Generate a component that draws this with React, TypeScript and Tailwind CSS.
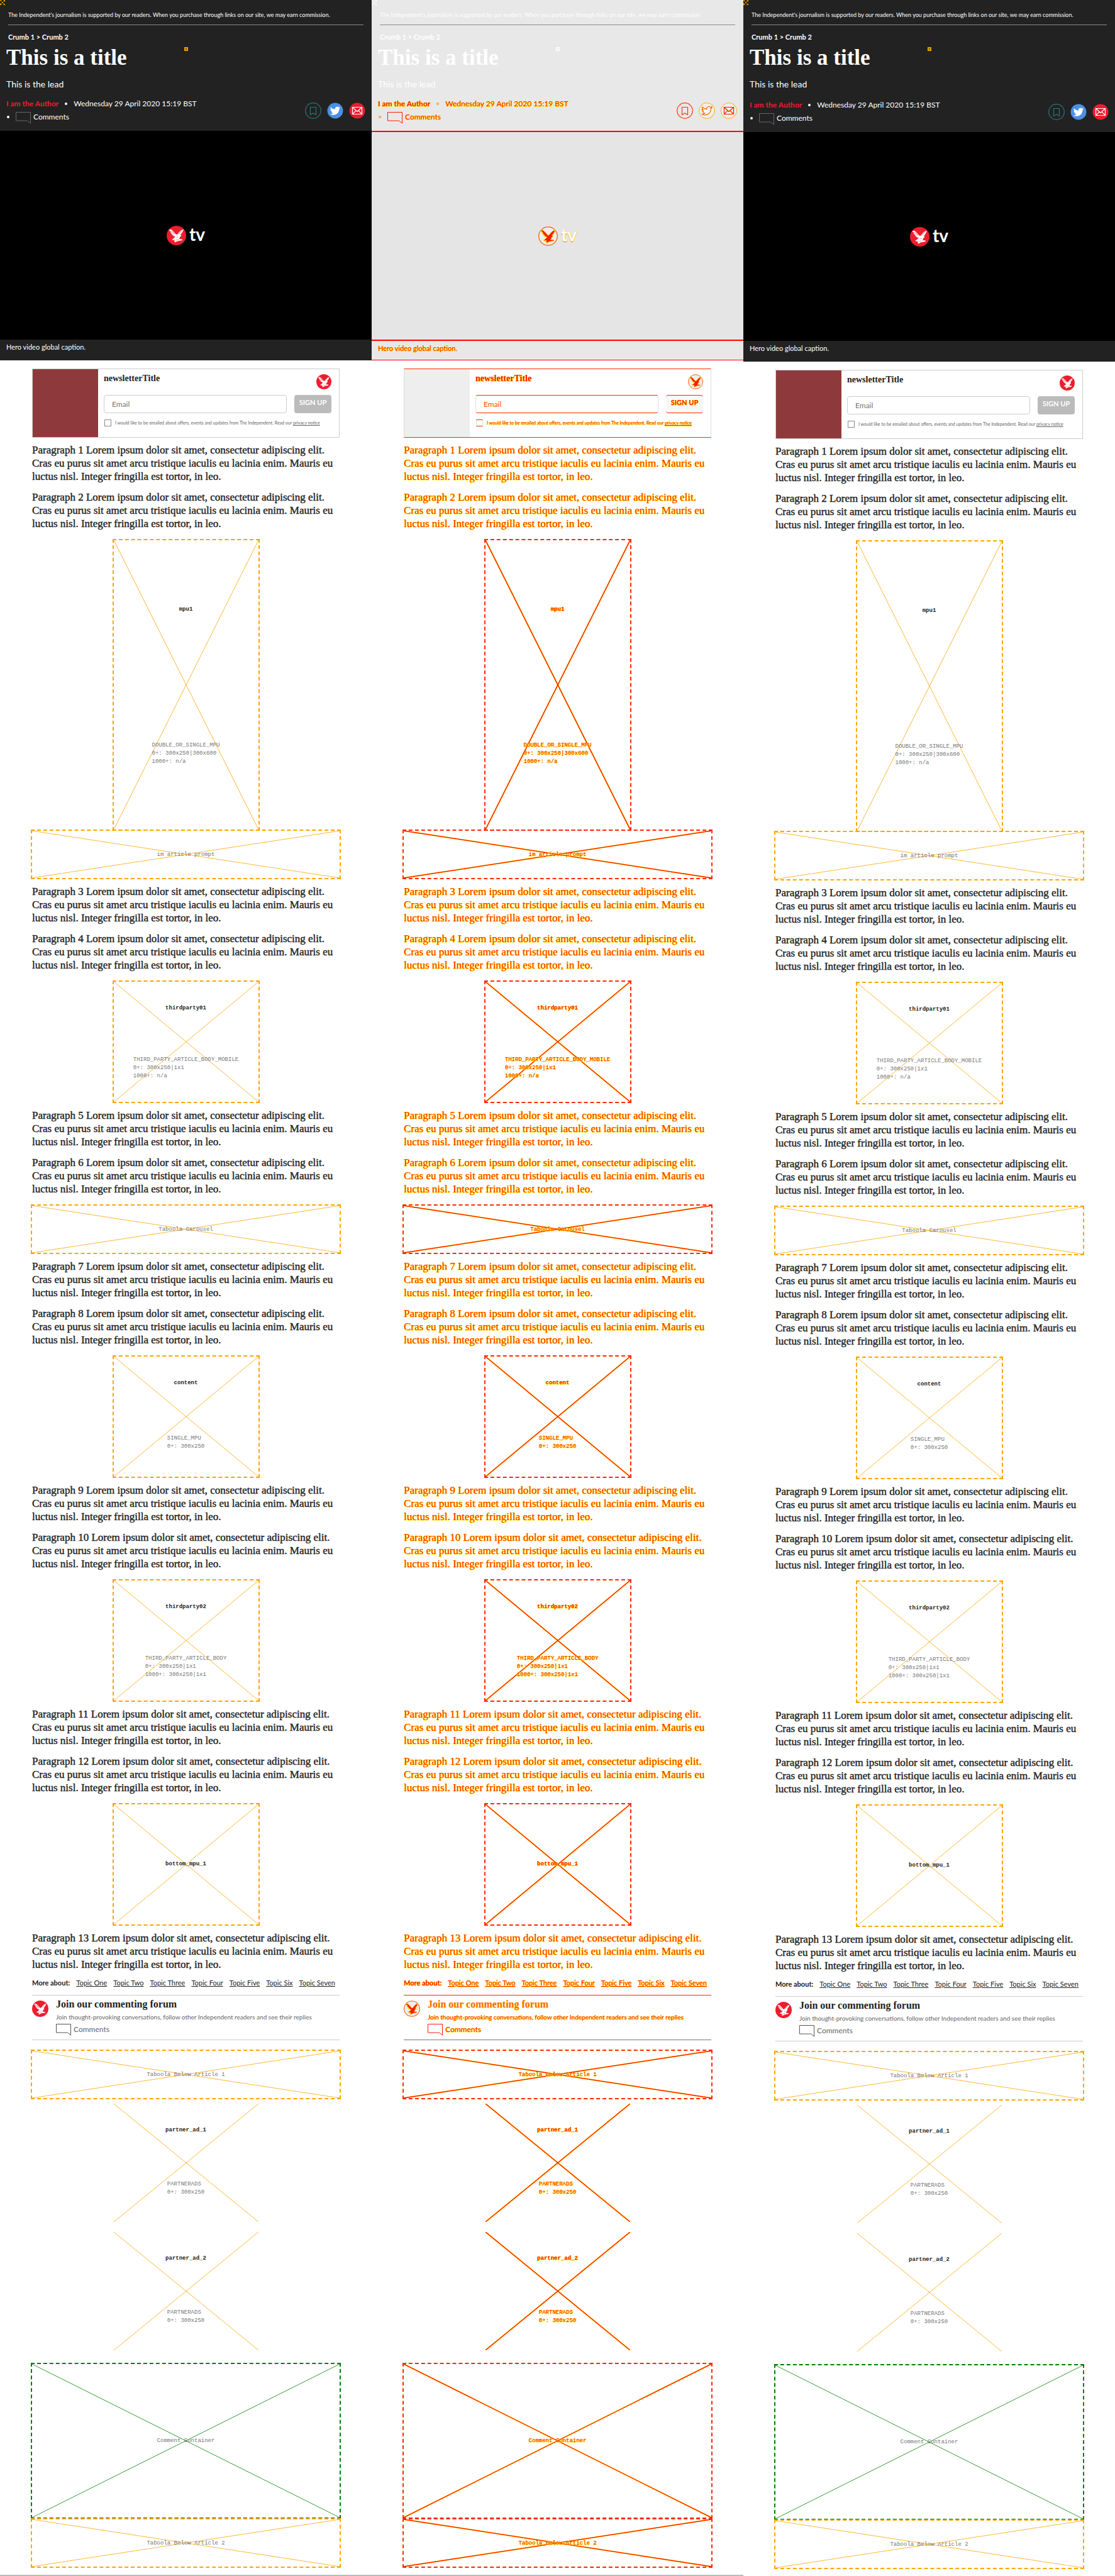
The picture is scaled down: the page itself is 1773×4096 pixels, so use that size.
import React, { createContext, useContext, useId } from "react";

type Variant = "base" | "diff" | "next";
const VariantContext = createContext<Variant>("base");
const useDiff = () => useContext(VariantContext) === "diff";

const changed = "text-[#ff1a00] [text-shadow:1px_0_0_#ffee00,0_1px_0_#ffee00]";
const LOREM =
  "Lorem ipsum dolor sit amet, consectetur adipiscing elit. Cras eu purus sit amet arcu tristique iaculis eu lacinia enim. Mauris eu luctus nisl. Integer fringilla est tortor, in leo.";
const TOPICS = ["One", "Two", "Three", "Four", "Five", "Six", "Seven"];

function Cross({ color }: { color: string }) {
  const diff = useDiff();
  return (
    <svg className="absolute inset-0 h-full w-full" aria-hidden="true">
      {diff && (
        <g stroke="#ffe000" strokeWidth="2.2">
          <line x1="0" y1="0" x2="100%" y2="100%" />
          <line x1="0" y1="100%" x2="100%" y2="0" />
        </g>
      )}
      <g stroke={diff ? "#ff1000" : color} strokeWidth={diff ? 1.3 : 0.8}>
        <line x1="0" y1="0" x2="100%" y2="100%" />
        <line x1="0" y1="100%" x2="100%" y2="0" />
      </g>
    </svg>
  );
}

function Strip({ label, size, green }: { label: string; size: string; green?: boolean }) {
  const diff = useDiff();
  const border = diff ? "border-[#ff2a00]" : green ? "border-[#008000]" : "border-[#ffa500]";
  return (
    <div
      className={`relative -mx-0.5 flex items-center justify-center border-2 border-dashed font-['Liberation_Mono',monospace] text-[9px] leading-[14px] ${border} ${size}`}
    >
      <Cross color={green ? "#008000" : "#ffa500"} />
      <span className={`relative ${diff ? changed : "text-[#777]"}`}>{label}</span>
    </div>
  );
}

function Ad({
  name,
  lines,
  size = "h-[195px]",
  plain,
}: {
  name: string;
  lines?: string[];
  size?: string;
  plain?: boolean;
}) {
  const diff = useDiff();
  const border = plain ? "border-transparent" : diff ? "border-[#ff2a00]" : "border-[#ffa500]";
  return (
    <div
      className={`relative mx-auto grid w-[234px] auto-rows-fr border-2 border-dashed font-['Liberation_Mono',monospace] text-[9px] leading-[13px] ${border} ${size}`}
    >
      <Cross color="#ffa500" />
      <strong
        className={`relative flex items-center justify-center ${lines ? "pb-2.5" : "pb-0"} ${diff ? changed : "text-[#222]"}`}
      >
        {name}
      </strong>
      {lines && (
        <div className="relative flex items-center justify-center pb-3">
          <div className={diff ? changed : "text-[#777]"}>
            {lines.map((line) => (
              <p key={line}>{line}</p>
            ))}
          </div>
        </div>
      )}
    </div>
  );
}

function Paragraphs({ from, to }: { from: number; to: number }) {
  const diff = useDiff();
  const items = [];
  for (let n = from; n <= to; n++) items.push(n);
  return (
    <div className="flex flex-col gap-3 pt-[9px] pb-[14px]">
      {items.map((n) => (
        <p
          key={n}
          className={`font-['Liberation_Serif',serif] text-[17px] leading-[21px] ${
            diff ? "text-[#ff3000] [text-shadow:1px_0_0_#ffee00,0_1px_0_#ffee00]" : "text-[#222] [-webkit-text-stroke:0.4px_#222]"
          }`}
        >
          {`Paragraph ${n} ${LOREM}`}
        </p>
      ))}
    </div>
  );
}

function Eagle({ className }: { className: string }) {
  const diff = useDiff();
  const disc = diff ? "#eeeeee" : "#ee1c2e";
  const bird = diff ? "#ff1a00" : "#ffffff";
  return (
    <svg viewBox="0 0 40 40" className={className} role="img" aria-label="Independent">
      <circle cx="20" cy="20" r={diff ? 19 : 20} fill={disc} stroke={diff ? "#ff5a00" : "none"} strokeWidth="1.6" />
      <path
        fill={bird}
        stroke={diff ? "#ffe600" : "none"}
        d="M5 8.500L8 7.500L10 8L13 10.500L17 15L20 18.500L22.500 17L26 12.500L30 9L34.500 7.300L33.500 11L31 15L28.500 18.500L30 20L29.500 21.500L27.500 22L27 25L25 27L31.500 27.500L32.500 28.500L31 30L27 30.500L22 31.500L18 34L15.500 33.500L17 31.500L15 31L17 29L12.500 29.500L10.500 28.500L14 26L18 22L12.500 21L15 20.500L10 18.500L13 18L8 15.500L10.500 15L6.500 12.500L9 12L5.500 10Z"
      />
      {!diff && <path stroke={disc} strokeWidth=".7" fill="none" d="M8 10L16 18M11 10.500L17 17M24 17L31 10M18 29.500L24 28.500M21 24L24 23.500" />}
    </svg>
  );
}

function Bubble({ stroke }: { stroke: string }) {
  const diff = useDiff();
  return (
    <svg viewBox="0 0 24 19" className="h-[19px] w-6 shrink-0" aria-hidden="true">
      <path d="M.5.5H23.500V18L18.500 14H.5Z" fill="none" stroke={diff ? "#ff1a00" : stroke} />
    </svg>
  );
}

function Header() {
  const variant = useContext(VariantContext);
  const diff = variant === "diff";
  const moved = diff ? changed : "text-white";
  return (
    <header className={`relative px-2.5 text-white ${diff ? "bg-[#e8e8e8]" : "bg-[#222]"} ${variant === "next" ? "h-[210px]" : "h-[208px]"}`}>
      <svg viewBox="0 0 8 8" className="absolute top-0 left-0 size-2" aria-hidden="true">
        <path d="M0 0L8 8M8 0L0 8" stroke={diff ? "#fff" : "#ffa500"} strokeWidth=".8" />
        <path d="M0 0H2.500M5.500 0H8V3M0 5V8H3M5 8H8V6" stroke={diff ? "#fff" : "#ffa500"} strokeWidth="1.6" fill="none" />
      </svg>
      <div className="mx-[3px] border-b border-[#8a8a8a] pt-[17px] pb-2">
        <p className="text-[9px] leading-[14px] whitespace-nowrap">
          The Independent's journalism is supported by our readers. When you purchase through links on our site, we may earn commission.
        </p>
      </div>
      <nav className="mx-[3px] pt-[11px] text-[11px] leading-4 font-bold">
        <a href="#crumb-1">Crumb 1</a> &gt; <a href="#crumb-2">Crumb 2</a>
      </nav>
      <svg viewBox="0 0 6 6" className="absolute top-[75px] left-1/2 size-1.5 -translate-x-1/2" aria-hidden="true">
        <rect width="6" height="6" fill={diff ? "#fff" : "#ffa500"} />
        <circle cx="3" cy="3" r="1.200" fill="none" stroke={diff ? "#ddd" : "#222"} strokeWidth=".7" />
      </svg>
      <h1 className="pt-1 font-['Liberation_Serif',serif] text-[35px] leading-[42px] font-bold">This is a title</h1>
      <p className="pt-[11px] text-sm leading-5">This is the lead</p>
      <div className={`flex items-center justify-between ${variant === "next" ? "pt-[13px]" : "pt-[11px]"}`}>
        <div className="text-xs leading-[19px]">
          <p className="flex items-center gap-[10px]">
            <a href="#author" className={`font-bold ${diff ? changed : "text-[#ee1c2e]"}`}>I am the Author</a>
            <span className={`size-1 rounded-full ${diff ? "border border-[#ff8a00]" : "bg-white"}`} />
            <time className={moved}>Wednesday 29 April 2020 15:19 BST</time>
          </p>
          <p className="flex items-center pl-px">
            <span className={`mr-[10px] size-1 rounded-full ${diff ? "border border-[#ff8a00]" : "bg-white"}`} />
            <span className="pt-1"><Bubble stroke="#666" /></span>
            <a href="#comments" className={`pl-1 ${moved}`}>Comments</a>
          </p>
        </div>
        <div className="flex items-center gap-[9px]">
          <button type="button" aria-label="Save">
            <svg viewBox="0 0 26 26" className="size-[26px]" fill="none" stroke={diff ? "#ff3a00" : "#2b7474"}>
              <circle cx="13" cy="13" r="12.300" strokeWidth="1.200" />
              <path d="M8.500 7.500H17.500V19.500L13 17L8.500 19.500Z" strokeWidth="1.200" />
            </svg>
          </button>
          <button type="button" aria-label="Tweet">
            <svg viewBox="0 0 26 26" className="size-[26px]">
              <circle cx="13" cy="13" r="12.500" fill={diff ? "#eee" : "#4a90e2"} stroke={diff ? "#ffb000" : "none"} />
              <path
                transform="translate(4.800 5) scale(.68)"
                fill="#fff"
                stroke={diff ? "#ff6a00" : "none"}
                strokeWidth="1.800"
                d="M23.953 4.570a10 10 0 01-2.825.775 4.958 4.958 0 002.163-2.723c-.951.555-2.005.959-3.127 1.184a4.920 4.920 0 00-8.384 4.482C7.690 8.095 4.067 6.130 1.640 3.162a4.822 4.822 0 00-.666 2.475c0 1.710.870 3.213 2.188 4.096a4.904 4.904 0 01-2.228-.616v.060a4.923 4.923 0 003.946 4.827 4.996 4.996 0 01-2.212.085 4.936 4.936 0 004.604 3.417 9.867 9.867 0 01-6.102 2.105c-.390 0-.779-.023-1.170-.067a13.995 13.995 0 007.557 2.209c9.053 0 13.998-7.496 13.998-13.985 0-.210 0-.420-.015-.630A9.935 9.935 0 0024 4.590z"
              />
            </svg>
          </button>
          <button type="button" aria-label="Email">
            <svg viewBox="0 0 26 26" className="size-[26px]">
              <circle cx="13" cy="13" r="12.500" fill={diff ? "#eee" : "#ee1c2e"} stroke={diff ? "#ffb000" : "none"} />
              <path
                d="M5.500 7.500H20.500V18.500H5.500ZM5.500 7.500L13 14.500L20.500 7.500M5.500 18.500L11 12.800M20.500 18.500L15 12.800"
                fill="none"
                stroke={diff ? "#ff1a00" : "#fff"}
                strokeWidth="1.200"
              />
            </svg>
          </button>
        </div>
      </div>
    </header>
  );
}

function Hero() {
  const diff = useDiff();
  return (
    <figure>
      <div
        className={`flex h-[332px] items-center justify-center gap-[5px] ${
          diff ? "border-t-2 border-[#f00] bg-[#e5e5e5]" : "bg-black"
        }`}
      >
        <Eagle className="size-[31px]" />
        <span className={`pb-1 text-[28px] leading-8 font-bold ${diff ? "text-white [text-shadow:1px_0_0_#ffd000,0_1px_0_#ff6a00]" : "text-white"}`}>
          tv
        </span>
      </div>
      <figcaption
        className={`h-[33px] px-2.5 pt-1 text-[11px] leading-4 ${
          diff ? `border-t-2 border-b border-t-[#f00] border-b-[#f00] bg-[#e8e8e8] ${changed}` : "bg-[#222] text-white"
        }`}
      >
        Hero video global caption.
      </figcaption>
    </figure>
  );
}

function Newsletter() {
  const diff = useDiff();
  const id = useId();
  const line = diff ? "border-x-[#ddd] border-y-[#ff2a00]" : "border-[#ccc]";
  return (
    <form className={`flex h-[110px] border ${line}`}>
      <div className={`w-[104px] shrink-0 ${diff ? "bg-[#eee]" : "bg-[#8e3a3c]"}`} />
      <div className="flex min-w-0 grow flex-col pr-3 pl-[9px]">
        <div className="flex justify-between pt-2">
          <h2 className={`font-['Liberation_Serif',serif] text-sm leading-[14px] font-bold ${diff ? changed : "text-[#222]"}`}>
            newsletterTitle
          </h2>
          <Eagle className="size-6" />
        </div>
        <div className="flex gap-3 pt-[9px]">
          <input
            type="email"
            aria-label="Email"
            placeholder="Email"
            className={`h-[29px] min-w-0 grow rounded-sm border px-3 text-xs ${
              diff ? "border-x-[#ddd] border-y-[#ff2a00] placeholder:text-[#ff4a00]" : "border-[#ccc] placeholder:text-[#777]"
            }`}
          />
          <button
            type="button"
            className={`h-[29px] w-[59px] shrink-0 rounded-sm pb-1 text-[11px] font-bold whitespace-nowrap ${
              diff ? `border-y border-[#ff2a00] bg-[#f8f8f8] ${changed}` : "bg-[#bbb] text-white"
            }`}
          >
            SIGN UP
          </button>
        </div>
        <div className={`flex items-center gap-1.5 pt-2 pl-px text-[7px] leading-[14px] whitespace-nowrap ${diff ? changed : "text-[#666]"}`}>
          <input
            id={`${id}-ok`}
            type="checkbox"
            className={`size-[11px] shrink-0 appearance-none border ${diff ? "border-x-[#ddd] border-y-[#ff2a00]" : "border-[#888]"}`}
          />
          <label htmlFor={`${id}-ok`}>
            I would like to be emailed about offers, events and updates from The Independent. Read our{" "}
            <a href="#privacy" className="underline">privacy notice</a>
          </label>
        </div>
      </div>
    </form>
  );
}

function Forum() {
  const diff = useDiff();
  return (
    <section
      className={`flex h-[72px] gap-3 border-t border-b ${diff ? "border-t-[#ff2a00] border-b-[#777]" : "border-[#ccc]"}`}
    >
      <Eagle className="mt-2 size-[26px] shrink-0" />
      <div className="pt-1 whitespace-nowrap">
        <h2 className={`font-['Liberation_Serif',serif] text-base leading-5 font-bold ${diff ? "text-[#ff6a00] [text-shadow:0_1px_0_#ffee00]" : "text-[#222]"}`}>
          Join our commenting forum
        </h2>
        <p className={`text-[10px] leading-5 ${diff ? changed : "text-[#666]"}`}>
          Join thought-provoking conversations, follow other Independent readers and see their replies
        </p>
        <a href="#comments" className={`flex items-center gap-1 text-xs leading-5 ${diff ? changed : "text-[#666]"}`}>
          <Bubble stroke="#555" />
          Comments
        </a>
      </div>
    </section>
  );
}

function Column({ variant }: { variant: Variant }) {
  const diff = variant === "diff";
  return (
    <VariantContext.Provider value={variant}>
      <article className="min-w-0 bg-white pb-[11px]">
        <Header />
        <Hero />
        <div className="px-[51px] pt-[13px]">
          <Newsletter />
          <Paragraphs from={1} to={2} />
          <Ad name="mpu1" size="h-[464px]" lines={["DOUBLE_OR_SINGLE_MPU", "0+: 300x250|300x600", "1000+: n/a"]} />
          <div className="-mt-0.5">
            <Strip label="im article prompt" size="h-[79px]" />
          </div>
          <Paragraphs from={3} to={4} />
          <Ad name="thirdparty01" lines={["THIRD_PARTY_ARTICLE_BODY_MOBILE", "0+: 300x250|1x1", "1000+: n/a"]} />
          <Paragraphs from={5} to={6} />
          <Strip label="Taboola Carousel" size="h-[79px]" />
          <Paragraphs from={7} to={8} />
          <Ad name="content" lines={["SINGLE_MPU", "0+: 300x250"]} />
          <Paragraphs from={9} to={10} />
          <Ad name="thirdparty02" lines={["THIRD_PARTY_ARTICLE_BODY", "0+: 300x250|1x1", "1000+: 300x250|1x1"]} />
          <Paragraphs from={11} to={12} />
          <Ad name="bottom_mpu_1" />
          <Paragraphs from={13} to={13} />
          <nav className="-mt-[14px] flex h-[38px] items-center gap-2.5 text-[11px] whitespace-nowrap">
            <strong className={diff ? changed : "text-[#222]"}>More about:</strong>
            {TOPICS.map((t) => (
              <a key={t} href={`#topic-${t}`} className={`underline ${diff ? changed : "text-[#222]"}`}>
                {`Topic ${t}`}
              </a>
            ))}
          </nav>
          <Forum />
          <div className="pt-[15px] pb-[5px]">
            <Strip label="Taboola Below Article 1" size="h-[79px]" />
          </div>
          <div className="flex flex-col gap-3 pb-[18px]">
            <Ad plain size="h-[192px]" name="partner_ad_1" lines={["PARTNERADS", "0+: 300x250"]} />
            <Ad plain size="h-[192px]" name="partner_ad_2" lines={["PARTNERADS", "0+: 300x250"]} />
          </div>
          <Strip green label="Comment Container" size="h-[248px]" />
          <div className="-mt-px">
            <Strip label="Taboola Below Article 2" size="h-[79px]" />
          </div>
        </div>
      </article>
    </VariantContext.Provider>
  );
}

export default function App() {
  return (
    <main className="grid min-h-screen grid-cols-3 items-start overflow-hidden bg-[#bbb] font-['Lato',sans-serif]">
      <Column variant="base" />
      <Column variant="diff" />
      <Column variant="next" />
    </main>
  );
}
